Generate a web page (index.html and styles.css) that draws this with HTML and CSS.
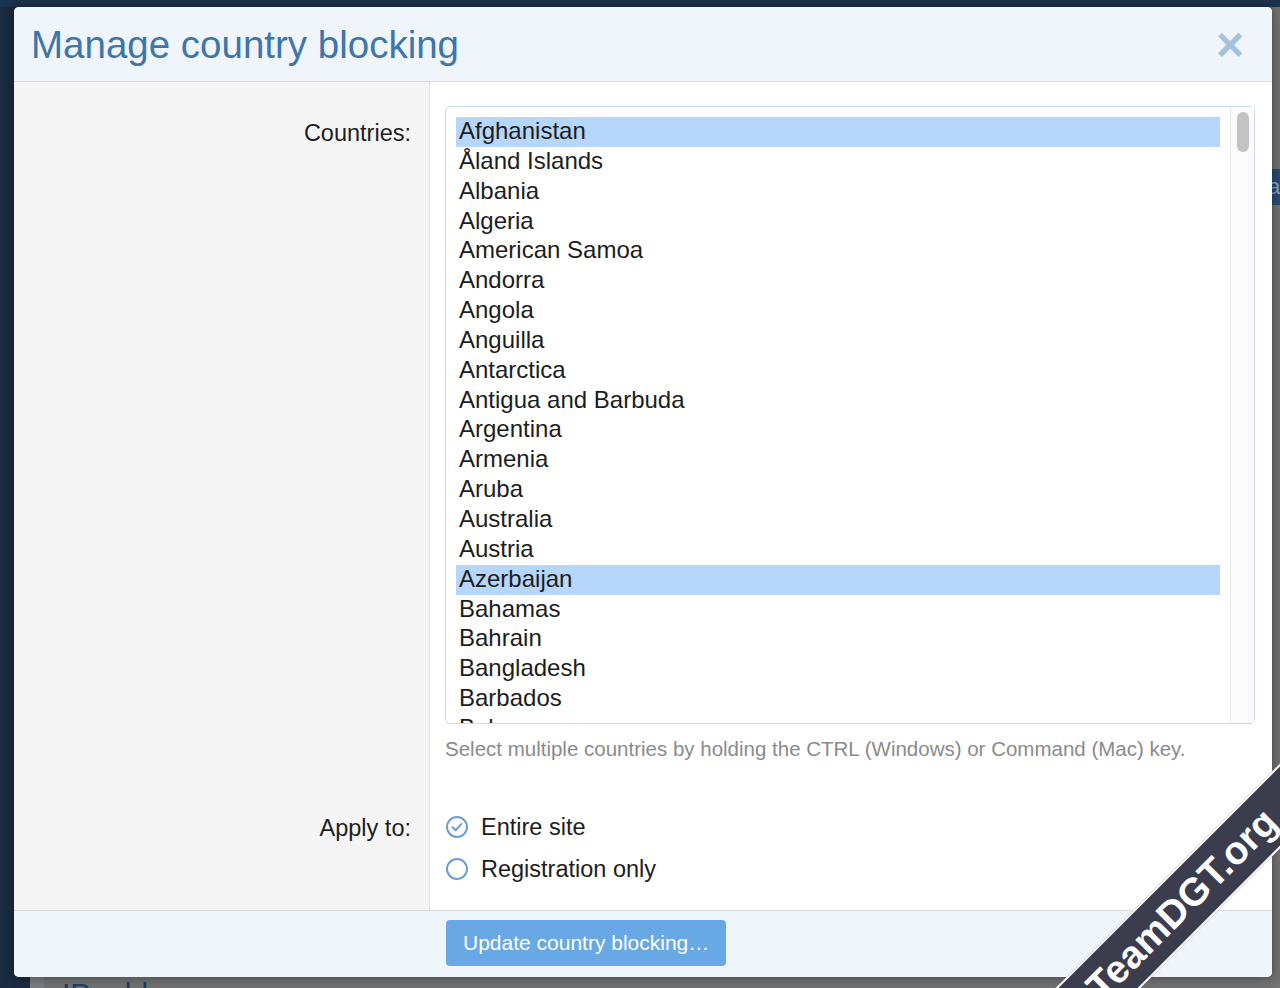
FILE: index.html
```html
<!DOCTYPE html>
<html lang="en">
<head>
    <meta charset="UTF-8">
    <meta name="viewport" content="width=device-width, initial-scale=1.0">
    <title>Manage country blocking</title>
    <link rel="stylesheet" href="styles.css">
</head>
<body>
    <!-- dimmed page behind the overlay -->
    <div class="underlay">
        <div class="underlay-top"></div>
        <div class="underlay-main">
            <div class="underlay-nav"></div>
            <div class="underlay-page">
                <div class="underlay-tab">a</div>
                <div class="underlay-heading">IP addresses</div>
            </div>
        </div>
    </div>

    <div class="modal">
        <header class="modal-header">
            <h1>Manage country blocking</h1>
            <span class="modal-close">&times;</span>
        </header>

        <div class="modal-body">
            <div class="form-row">
                <div class="row-label">Countries:</div>
                <div class="row-field">
                    <div class="country-select">
                        <div class="country-options">
                            <div class="option selected">Afghanistan</div>
                            <div class="option">Åland Islands</div>
                            <div class="option">Albania</div>
                            <div class="option">Algeria</div>
                            <div class="option">American Samoa</div>
                            <div class="option">Andorra</div>
                            <div class="option">Angola</div>
                            <div class="option">Anguilla</div>
                            <div class="option">Antarctica</div>
                            <div class="option">Antigua and Barbuda</div>
                            <div class="option">Argentina</div>
                            <div class="option">Armenia</div>
                            <div class="option">Aruba</div>
                            <div class="option">Australia</div>
                            <div class="option">Austria</div>
                            <div class="option selected">Azerbaijan</div>
                            <div class="option">Bahamas</div>
                            <div class="option">Bahrain</div>
                            <div class="option">Bangladesh</div>
                            <div class="option">Barbados</div>
                            <div class="option">Belarus</div>
                            <div class="option">Belgium</div>
                        </div>
                        <div class="scroll-track">
                            <div class="scroll-thumb"></div>
                        </div>
                    </div>
                    <p class="hint">Select multiple countries by holding the CTRL (Windows) or Command (Mac) key.</p>
                </div>
            </div>

            <div class="form-row">
                <div class="row-label apply-label">Apply to:</div>
                <div class="row-field apply-field">
                    <label class="radio">
                        <svg class="radio-icon" viewBox="0 0 24 24" width="24" height="24">
                            <circle cx="12" cy="12" r="10" fill="#fff" stroke="#6b9fd1" stroke-width="2"/>
                            <path d="M7.5 12.2 L10.6 15.2 L16.4 8.9" fill="none" stroke="#6b9fd1" stroke-width="2" stroke-linecap="round" stroke-linejoin="round"/>
                        </svg>
                        Entire site
                    </label>
                    <label class="radio">
                        <svg class="radio-icon" viewBox="0 0 24 24" width="24" height="24">
                            <circle cx="12" cy="12" r="10" fill="#fff" stroke="#6b9fd1" stroke-width="2"/>
                        </svg>
                        Registration only
                    </label>
                </div>
            </div>
        </div>

        <footer class="modal-footer">
            <button class="btn-primary" type="button">Update country blocking…</button>
        </footer>
    </div>

    <div class="ribbon">TeamDGT.org</div>
</body>
</html>
```

FILE: styles.css
```css
/* Global */
body {
    margin: 0;
    font-family: 'Liberation Sans', Arial, sans-serif;
    color: #1d1d1d;
    background-color: #1b2c43;
    overflow: hidden;
    height: 988px;
}

/* Page behind the overlay */
.underlay {
    height: 988px;
    display: flex;
    flex-direction: column;
}

.underlay-top {
    height: 7px;
    background-color: #1d3250;
}

.underlay-main {
    flex: 1;
    display: flex;
}

.underlay-nav {
    width: 30px;
    background-color: #1a2b41;
}

.underlay-page {
    flex: 1;
    background-color: #727272;
    border-left: 14px solid #7d7d7d;
    display: flex;
    flex-direction: column;
    justify-content: space-between;
    padding-top: 162px;
}

.underlay-tab {
    align-self: flex-end;
    width: 12px;
    height: 36px;
    line-height: 36px;
    background-color: #2c4c73;
    color: #8aa4c2;
    font-size: 22px;
    overflow: hidden;
}

.underlay-heading {
    height: 14px;
    padding-left: 18px;
    font-size: 30px;
    line-height: 40px;
    color: #1f3b60;
    overflow: hidden;
}

/* Modal */
.modal {
    position: absolute;
    top: 7px;
    left: 14px;
    width: 1258px;
    height: 970px;
    background-color: #fff;
    border-radius: 5px;
    box-shadow: 0 0 12px rgba(0, 0, 0, 0.45);
    overflow: hidden;
    display: flex;
    flex-direction: column;
}

.modal-header {
    height: 75px;
    background-color: #eff5fb;
    border-bottom: 1px solid #d9dfe5;
    display: flex;
    align-items: center;
    justify-content: space-between;
    padding: 1px 28px 0 17px;
    box-sizing: border-box;
}

.modal-header h1 {
    margin: 0;
    font-size: 38.5px;
    font-weight: normal;
    color: #3e76aa;
}

.modal-close {
    font-size: 48px;
    line-height: 1;
    color: #a4c1dd;
    font-weight: bold;
}

.modal-body {
    flex: 1;
    display: flex;
    flex-direction: column;
    border-bottom: 1px solid #d6d9dc;
}

.form-row {
    display: grid;
    grid-template-columns: 416px 1fr;
}

.form-row:last-child {
    flex: 1;
}

.row-label {
    background-color: #f5f5f5;
    border-right: 1px solid #e3e3e3;
    text-align: right;
    padding: 36px 18px 0 0;
    font-size: 23.5px;
    line-height: 30px;
}

.row-field {
    padding: 24px 17px 0 15px;
}

/* Country list */
.country-select {
    height: 616px;
    border: 1px solid #c9dced;
    border-radius: 5px;
    display: flex;
    overflow: hidden;
}

.country-options {
    flex: 1;
    padding: 10px 10px 0 10px;
    overflow: hidden;
}

.option {
    height: 29.85px;
    line-height: 28px;
    padding-left: 3px;
    font-size: 24px;
    white-space: nowrap;
}

.option.selected {
    background-color: #b7d6fb;
}

.scroll-track {
    width: 23px;
    border-left: 1px solid #e8e8e8;
    background-color: #fbfbfb;
    padding-top: 5px;
}

.scroll-thumb {
    width: 12px;
    height: 40px;
    margin: 0 auto;
    border-radius: 6px;
    background-color: #c3c3c3;
}

.hint {
    margin: 13px 0 0;
    font-size: 20.5px;
    line-height: 24px;
    color: #8b8b8b;
}

/* Apply to */
.apply-label {
    padding-top: 52px;
}

.apply-field {
    padding-top: 51px;
    padding-bottom: 20px;
    display: flex;
    flex-direction: column;
    gap: 12px;
}

.radio {
    display: flex;
    align-items: center;
    gap: 12px;
    font-size: 23.5px;
    line-height: 30px;
}

.radio-icon {
    flex: none;
}

/* Footer */
.modal-footer {
    height: 66px;
    background-color: #eef5fb;
    padding: 9px 0 0 432px;
    box-sizing: border-box;
}

.btn-primary {
    height: 46px;
    padding: 0 17px;
    border: none;
    border-radius: 4px;
    background-color: #67a8e5;
    color: #fff;
    font-family: 'Liberation Sans', Arial, sans-serif;
    font-size: 21px;
}

/* Watermark ribbon */
.ribbon {
    position: absolute;
    left: 882px;
    top: 874px;
    width: 600px;
    height: 56px;
    line-height: 56px;
    transform: rotate(-45deg);
    background-color: #3b3d4f;
    border-top: 2px solid #fff;
    border-bottom: 2px solid #fff;
    color: #fff;
    font-weight: bold;
    font-size: 39px;
    text-align: center;
}
```
